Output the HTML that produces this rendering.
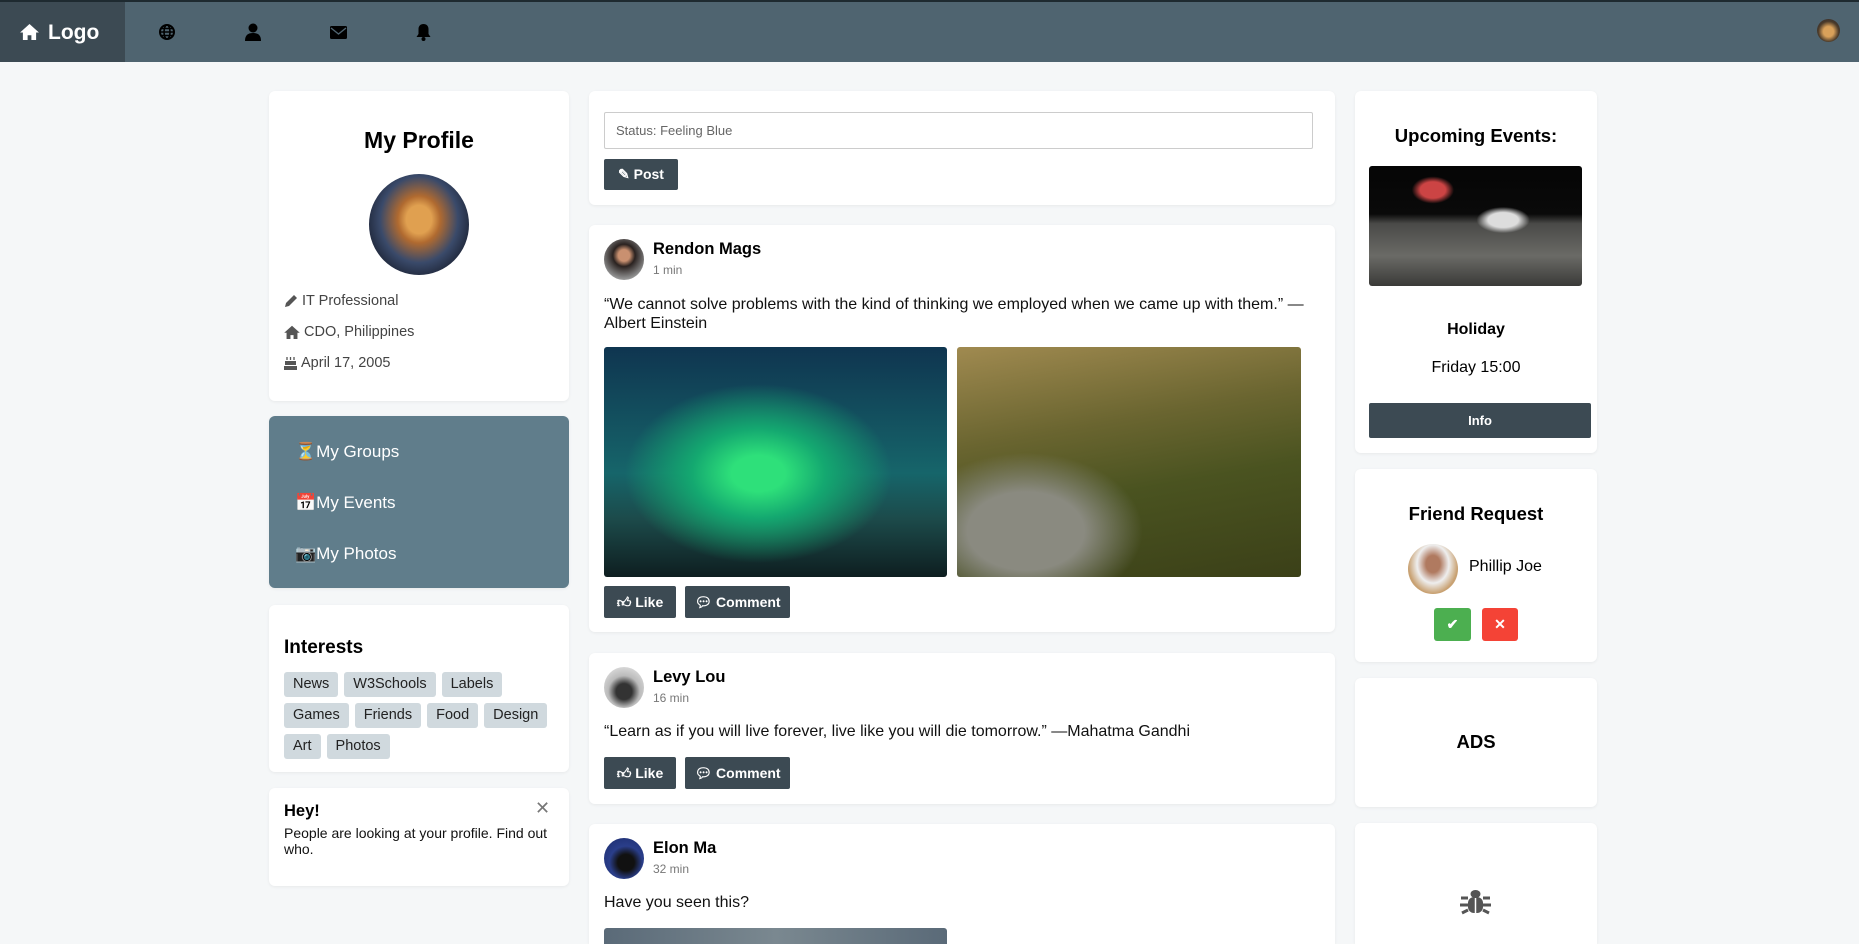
<!DOCTYPE html>
<html style="width:1859px;height:944px;overflow:hidden"><head><meta charset="utf-8">
<style>
*{box-sizing:border-box;margin:0;padding:0}
html,body{width:1859px;height:944px;overflow:hidden}
body{background:#f5f7f8;font-family:"Liberation Sans",Arial,sans-serif;color:#000;position:relative}
.abs{position:absolute}
.nav{left:0;top:0;width:1859px;height:62px;background:#4f6470;border-top:2px solid #1e2a30}
.logo{left:0;top:0;width:125px;height:60px;background:#3c4a53;color:#fff;font-weight:bold;font-size:21px}
.card{position:absolute;background:#fff;border-radius:6px;box-shadow:0 1px 3px rgba(0,0,0,.06);overflow:hidden}
.btn{position:absolute;background:#3c4a53;color:#fff;font-size:14px;font-weight:bold;border-radius:2px;display:flex;align-items:center;justify-content:center;gap:4px}
.tag{display:inline-block;background:#d0d9de;border-radius:3px;font-size:14.5px;height:25px;line-height:25px;padding:0 9px;margin:0 6px 6px 0;color:#222}
.av{position:absolute;border-radius:50%}
.name{position:absolute;font-weight:bold;font-size:16.5px}
.time{position:absolute;font-size:12px;color:#777}
.txt{position:absolute;font-size:16px;line-height:19px;color:#111}
.info div{display:flex;align-items:center;gap:4px;height:31px}
</style></head><body>
<div class="abs nav">
 <div class="abs logo"><svg class="abs" style="left:20px;top:21px" width="19" height="17" viewBox="0 0 20 18"><path d="M10 1L0 10h3v8h5v-5h4v5h5v-8h3z" fill="#fff"/></svg><span class="abs" style="left:48px;top:19px">Logo</span></div>
 <svg class="abs" style="left:159px;top:22px" width="16" height="16" viewBox="0 0 16 16"><circle cx="8" cy="8" r="7" fill="none" stroke="#000" stroke-width="2"/><ellipse cx="8" cy="8" rx="3" ry="7" fill="none" stroke="#000" stroke-width="1.6"/><path d="M1 8h14M2 4.5h12M2 11.5h12" stroke="#000" stroke-width="1.4"/></svg>
 <svg class="abs" style="left:245px;top:21px" width="16" height="18" viewBox="0 0 16 18"><circle cx="8" cy="5" r="4.5"/><path d="M0 18c0-6 3-8 8-8s8 2 8 8z"/></svg>
 <svg class="abs" style="left:330px;top:24px" width="17" height="13" viewBox="0 0 17 13"><rect width="17" height="13" rx="1.5"/><path d="M1 2l7.5 6 7.5-6" stroke="#4f6470" stroke-width="1.4" fill="none"/></svg>
 <svg class="abs" style="left:416px;top:21px" width="15" height="18" viewBox="0 0 15 18"><path d="M7.5 1c3 0 5 2 5 5v5l2 3H0.5l2-3V6c0-3 2-5 5-5z"/><circle cx="7.5" cy="16" r="2"/></svg>
 <div class="av" style="left:1817px;top:17px;width:23px;height:23px;background:radial-gradient(circle at 50% 55%,#d9a15a 0 30%,#4a3a2a 60%,#2a2a30)"></div>
</div>

<div class="card" style="left:269px;top:91px;width:300px;height:310px">
 <div class="abs" style="left:0;width:300px;top:36px;text-align:center;font-weight:bold;font-size:23px">My Profile</div>
 <div class="av" style="left:100px;top:83px;width:100px;height:101px;background:radial-gradient(ellipse at 50% 45%,#e0a050 0 18%,#b06a30 30%,#3a4a6a 55%,#1a2030 80%)"></div>
 <div class="abs info" style="left:15px;top:194px;font-size:14.5px;color:#444">
  <div><svg width="14" height="14" viewBox="0 0 14 14"><path d="M1 13l1-4 8-8 3 3-8 8z" fill="#555"/></svg>IT Professional</div>
  <div><svg width="16" height="14" viewBox="0 0 20 18"><path d="M10 1L0 10h3v8h5v-5h4v5h5v-8h3z" fill="#555"/></svg>CDO, Philippines</div>
  <div><svg width="13" height="14" viewBox="0 0 13 14"><path d="M3 1v3M6.5 1v3M10 1v3" stroke="#555" stroke-width="1.3"/><rect x="1" y="5" width="11" height="4" fill="#555"/><rect x="0" y="10" width="13" height="4" fill="#555"/></svg>April 17, 2005</div>
 </div>
</div>
<div class="card" style="left:269px;top:416px;width:300px;height:172px;background:#607d8b">
 <div class="abs" style="left:26px;top:10px;color:#fff;font-size:17px;line-height:51px">
  <div>⏳My Groups</div><div>📅My Events</div><div>📷My Photos</div>
 </div>
</div>
<div class="card" style="left:269px;top:605px;width:300px;height:167px">
 <div class="abs" style="left:15px;top:32px;font-weight:bold;font-size:19px">Interests</div>
 <div class="abs" style="left:15px;top:67px;width:285px">
  <span class="tag">News</span><span class="tag">W3Schools</span><span class="tag">Labels</span><br><span class="tag">Games</span><span class="tag">Friends</span><span class="tag">Food</span><span class="tag">Design</span><br><span class="tag">Art</span><span class="tag">Photos</span>
 </div>
</div>
<div class="card" style="left:269px;top:788px;width:300px;height:98px">
 <div class="abs" style="left:15px;top:14px;font-weight:bold;font-size:16.5px">Hey!</div>
 <div class="abs" style="left:266px;top:10px;font-size:18px;color:#777">✕</div>
 <div class="abs" style="left:15px;top:37px;width:275px;font-size:14px;line-height:16px;color:#111">People are looking at your profile. Find out who.</div>
</div>

<div class="card" style="left:589px;top:91px;width:746px;height:114px">
 <div class="abs" style="left:15px;top:21px;width:709px;height:37px;border:1px solid #ccc;border-radius:2px;font-size:13px;color:#666;line-height:35px;padding-left:11px">Status: Feeling Blue</div>
 <div class="btn" style="left:15px;top:68px;width:74px;height:31px">✎ Post</div>
</div>

<div class="card" style="left:589px;top:225px;width:746px;height:407px">
 <div class="av" style="left:15px;top:14px;width:40px;height:41px;background:radial-gradient(circle at 50% 40%,#c99070 0 18%,#2a2220 35%,#888 70%,#ddd)"></div>
 <div class="name" style="left:64px;top:15px">Rendon Mags</div>
 <div class="time" style="left:64px;top:38px">1 min</div>
 <div class="txt" style="left:15px;top:70px;width:715px">“We cannot solve problems with the kind of thinking we employed when we came up with them.” —Albert Einstein</div>
 <div class="abs" style="left:15px;top:122px;width:343px;height:230px;border-radius:3px;background:radial-gradient(ellipse at 45% 55%,#2ee07a 0 10%,#14a870 25%,transparent 50%),linear-gradient(180deg,#0f3550 0%,#16656a 55%,#1c4a4a 75%,#0e1e20 100%)"></div>
 <div class="abs" style="left:368px;top:122px;width:344px;height:230px;border-radius:3px;background:radial-gradient(ellipse at 20% 80%,#8a8a80 0 15%,transparent 30%),linear-gradient(170deg,#a08a50 0%,#6a6530 35%,#4a5320 60%,#3b4018 100%)"></div>
 <div class="btn" style="left:15px;top:361px;width:72px;height:32px">👍︎ Like</div>
 <div class="btn" style="left:96px;top:361px;width:105px;height:32px">💬︎ Comment</div>
</div>

<div class="card" style="left:589px;top:653px;width:746px;height:151px">
 <div class="av" style="left:15px;top:14px;width:40px;height:41px;background:radial-gradient(circle at 50% 60%,#333 0 25%,#bbb 50%,#eee)"></div>
 <div class="name" style="left:64px;top:15px">Levy Lou</div>
 <div class="time" style="left:64px;top:38px">16 min</div>
 <div class="txt" style="left:15px;top:69px">“Learn as if you will live forever, live like you will die tomorrow.” —Mahatma Gandhi</div>
 <div class="btn" style="left:15px;top:104px;width:72px;height:32px">👍︎ Like</div>
 <div class="btn" style="left:96px;top:104px;width:105px;height:32px">💬︎ Comment</div>
</div>

<div class="card" style="left:589px;top:824px;width:746px;height:120px;border-radius:6px 6px 0 0">
 <div class="av" style="left:15px;top:14px;width:40px;height:41px;background:radial-gradient(circle at 55% 60%,#111 0 25%,#2a3e8a 50%,#1a2a6a)"></div>
 <div class="name" style="left:64px;top:15px">Elon Ma</div>
 <div class="time" style="left:64px;top:38px">32 min</div>
 <div class="txt" style="left:15px;top:69px">Have you seen this?</div>
 <div class="abs" style="left:15px;top:104px;width:343px;height:30px;border-radius:3px 3px 0 0;background:linear-gradient(90deg,#5a6a78,#7a8890,#5a6a78)"></div>
</div>

<div class="card" style="left:1355px;top:91px;width:242px;height:362px">
 <div class="abs" style="left:0;width:242px;top:34px;text-align:center;font-weight:bold;font-size:18.5px">Upcoming Events:</div>
 <div class="abs" style="left:14px;top:75px;width:213px;height:120px;border-radius:3px;background:radial-gradient(ellipse at 63% 45%,#ddd 0 8%,transparent 14%),radial-gradient(ellipse at 30% 20%,#c44 0 6%,transparent 10%),linear-gradient(180deg,#050505 0%,#0a0a0a 40%,#4a4a48 48%,#6a6a66 75%,#3a3a38 100%)"></div>
 <div class="abs" style="left:0;width:242px;top:230px;text-align:center;font-weight:bold;font-size:16px">Holiday</div>
 <div class="abs" style="left:0;width:242px;top:268px;text-align:center;font-size:16px">Friday 15:00</div>
 <div class="btn" style="left:14px;top:312px;width:222px;height:35px;font-size:13px">Info</div>
</div>
<div class="card" style="left:1355px;top:469px;width:242px;height:193px">
 <div class="abs" style="left:0;width:242px;top:34px;text-align:center;font-weight:bold;font-size:18.5px">Friend Request</div>
 <div class="av" style="left:53px;top:75px;width:50px;height:50px;background:radial-gradient(ellipse at 50% 40%,#b07a60 0 20%,#eee 45%,#c8a070 70%,#ccc)"></div>
 <div class="abs" style="left:114px;top:89px;font-size:16px">Phillip Joe</div>
 <div class="btn" style="left:79px;top:139px;width:37px;height:33px;background:#4caf50;border-radius:3px">✔</div>
 <div class="btn" style="left:127px;top:139px;width:36px;height:33px;background:#f44336;border-radius:3px">✕</div>
</div>
<div class="card" style="left:1355px;top:678px;width:242px;height:129px">
 <div class="abs" style="left:0;width:242px;top:53px;text-align:center;font-weight:bold;font-size:18.5px">ADS</div>
</div>
<div class="card" style="left:1355px;top:823px;width:242px;height:121px;border-radius:6px 6px 0 0">
 <svg class="abs" style="left:105px;top:65px" width="31" height="30" viewBox="0 0 31 30"><g fill="#555"><ellipse cx="15.5" cy="6" rx="5" ry="4"/><rect x="8" y="9" width="15" height="16" rx="6"/><path d="M1 10h7M23 10h7M0 17h8M23 17h8M2 25l6-3M29 25l-6-3" stroke="#555" stroke-width="3"/></g><path d="M15.5 10v15" stroke="#fff" stroke-width="1.5"/></svg>
</div>
</body></html>
